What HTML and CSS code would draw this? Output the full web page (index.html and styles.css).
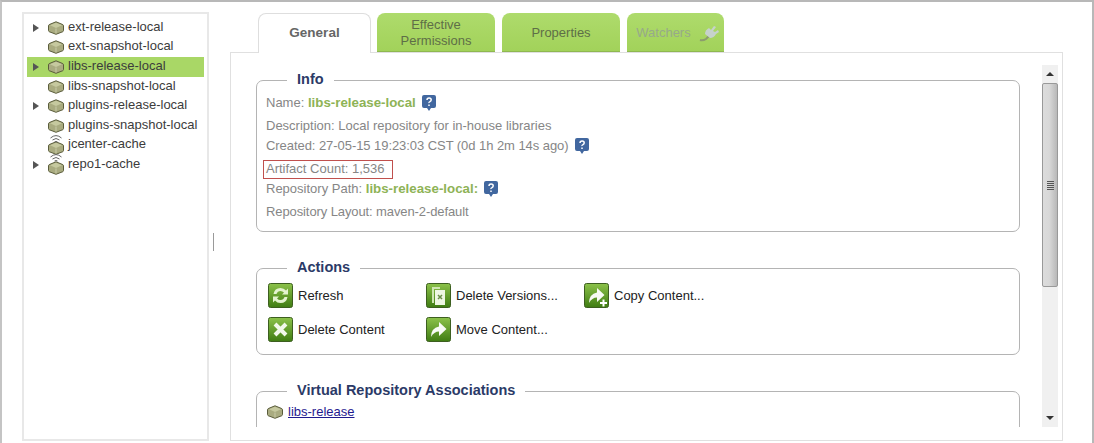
FILE: index.html
```html
<!DOCTYPE html>
<html lang="en">
<head>
<meta charset="utf-8">
<title>Repository Browser</title>
<link rel="stylesheet" href="styles.css">
</head>
<body>
<svg class="defs" width="0" height="0" aria-hidden="true">
  <defs>
    <linearGradient id="green" x1="0" y1="0" x2="0" y2="1">
      <stop offset="0" stop-color="#8cc24a"/>
      <stop offset="1" stop-color="#3f7c12"/>
    </linearGradient>
    <symbol id="cube" viewBox="0 0 16 14">
      <path d="M8 .8 14.800 3.600Q15.500 4 15.500 5V9.500Q15.500 10.300 14.800 10.700L8 13.300 1.200 10.700Q.5 10.300.5 9.500V5Q.5 4 1.200 3.600z" fill="#a9ab80" stroke="#5b5d3c" stroke-width="1"/>
      <path d="M8 1.800 14 4.300 8 7 2 4.300z" fill="#c6c99f"/>
      <path d="M8 7.500v5" stroke="#c8caa8" stroke-width="1"/>
    </symbol>
    <symbol id="wifi" viewBox="0 0 16 9">
      <path d="M2.500 4Q8-.8 13.500 4M4.500 6Q8 3 11.500 6M6.500 8Q8 7 9.500 8" fill="none" stroke="#666" stroke-width="1"/>
    </symbol>
    <symbol id="help" viewBox="0 0 16 18">
      <path d="M3 1h10a2 2 0 0 1 2 2v9a2 2 0 0 1-2 2h-3l-2 3-2-3H3a2 2 0 0 1-2-2V3a2 2 0 0 1 2-2z" fill="#41679f"/>
      <path d="M6 6q0-2 2.100-2t2.100 1.800q0 1.200-1.200 1.800t-1 1.400M8 10.500v1.500" fill="none" stroke="#fff" stroke-width="1.500"/>
    </symbol>
    <symbol id="arrow" viewBox="0 0 25 25">
      <path d="M5 20q0-9 8-10.500V5l7.500 7-7.500 7v-4.500q-5 0-8 5.500z" fill="#fff" opacity=".95"/>
    </symbol>
  </defs>
</svg>
<div class="app">
  <nav class="tree">
    <div class="node"><span class="caret"></span><svg class="cube"><use href="#cube"/></svg><span>ext-release-local</span></div>
    <div class="node"><span class="nocaret"></span><svg class="cube"><use href="#cube"/></svg><span>ext-snapshot-local</span></div>
    <div class="node selected"><span class="caret"></span><svg class="cube"><use href="#cube"/></svg><span>libs-release-local</span></div>
    <div class="node"><span class="nocaret"></span><svg class="cube"><use href="#cube"/></svg><span>libs-snapshot-local</span></div>
    <div class="node"><span class="caret"></span><svg class="cube"><use href="#cube"/></svg><span>plugins-release-local</span></div>
    <div class="node"><span class="nocaret"></span><svg class="cube"><use href="#cube"/></svg><span>plugins-snapshot-local</span></div>
    <div class="node"><span class="nocaret"></span><span class="cached"><svg class="wifi"><use href="#wifi"/></svg><svg class="cube"><use href="#cube"/></svg></span><span>jcenter-cache</span></div>
    <div class="node"><span class="caret"></span><span class="cached"><svg class="wifi"><use href="#wifi"/></svg><svg class="cube"><use href="#cube"/></svg></span><span>repo1-cache</span></div>
  </nav>
  <div class="splitter"><span class="grip"></span></div>
  <main class="main">
    <div class="tabs">
      <div class="tab active">General</div>
      <div class="tab wide">Effective<br>Permissions</div>
      <div class="tab wide">Properties</div>
      <div class="tab off">Watchers<svg class="plug" viewBox="0 0 20 20"><path d="M1 17q3 1 6-1l3-3" fill="none" stroke="#8c9c6e" stroke-width="2"/><path d="M6 11q0-4 4-6l2 2 3-4 2 1-3 4 2 1 3-2 1 2-3 2q-2 4-6 4z" fill="#c6d2cc"/></svg></div>
    </div>
    <div class="panel">
      <div class="scroll">
        <fieldset class="box info">
          <legend>Info</legend>
          <div class="row">Name:&nbsp;<b class="val">libs-release-local</b><svg class="help"><use href="#help"/></svg></div>
          <div class="row gap">Description: Local repository for in-house libraries</div>
          <div class="row tight">Created: 27-05-15 19:23:03 CST (0d 1h 2m 14s ago)<svg class="help"><use href="#help"/></svg></div>
          <div class="row gap"><span class="mark">Artifact Count: 1,536</span></div>
          <div class="row">Repository Path:&nbsp;<b class="val">libs-release-local:</b><svg class="help"><use href="#help"/></svg></div>
          <div class="row gap tighter">Repository Layout: maven-2-default</div>
        </fieldset>
        <fieldset class="box actions">
          <legend>Actions</legend>
          <div class="grid">
            <div class="act"><svg class="btn" viewBox="0 0 25 25"><rect class="btnbg" fill="url(#green)" x=".5" y=".5" width="24" height="24" rx="2"/><path d="M5.500 11q1-6 7-6 3.500 0 5.500 2.500l2-2v6h-6l2-2q-1.500-1.500-3.500-1.500-3 0-4 3zM19.500 14q-1 6-7 6-3.500 0-5.500-2.500l-2 2v-6h6l-2 2q1.500 1.500 3.500 1.500 3 0 4-3z" fill="#e4f3cf"/></svg>Refresh</div>
            <div class="act"><svg class="btn" viewBox="0 0 25 25"><rect class="btnbg" fill="url(#green)" x=".5" y=".5" width="24" height="24" rx="2"/><path d="M6 4h8v2H8v14H6z" fill="#cfe6b2"/><path d="M9 7h10v15H9z" fill="#eef7e2"/><path d="m12 12 4 4m0-4-4 4" stroke="#6b8f49" stroke-width="1.500"/></svg>Delete Versions...</div>
            <div class="act"><svg class="btn" viewBox="0 0 25 25"><rect class="btnbg" fill="url(#green)" x=".5" y=".5" width="24" height="24" rx="2"/><use href="#arrow"/><path d="M16 20h7M19.500 16.500v7" stroke="#fff" stroke-width="2"/></svg>Copy Content...</div>
            <div class="act"><svg class="btn" viewBox="0 0 25 25"><rect class="btnbg" fill="url(#green)" x=".5" y=".5" width="24" height="24" rx="2"/><path d="m7 7 11 11m0-11L7 18" stroke="#f2f8ea" stroke-width="4"/></svg>Delete Content</div>
            <div class="act"><svg class="btn" viewBox="0 0 25 25"><rect class="btnbg" fill="url(#green)" x=".5" y=".5" width="24" height="24" rx="2"/><use href="#arrow"/></svg>Move Content...</div>
          </div>
        </fieldset>
        <fieldset class="box virtual">
          <legend>Virtual Repository Associations</legend>
          <div class="assoc"><svg class="cube"><use href="#cube"/></svg><a href="#">libs-release</a></div>
        </fieldset>
      </div>
      <div class="bar">
        <div class="up"></div>
        <div class="thumb"><span class="lines"></span></div>
        <div class="track"></div>
        <div class="down"></div>
      </div>
    </div>
  </main>
</div>
</body>
</html>
```

FILE: styles.css
```css
* { box-sizing: border-box; }
html, body { margin: 0; height: 100%; background: #fff; overflow: hidden; }
body { font: 13px/1.2 "Liberation Sans", Arial, sans-serif; color: #333; }
.defs { position: absolute; }

.app {
  display: flex;
  height: 443px;
  border-top: 2px solid #b8b8b8;
  border-left: 2px solid #c4c4c4;
  border-right: 2px solid #b8b8b8;
  padding: 10px 0 2px 20px;
}

.tree {
  width: 187px;
  border: 2px solid #e8e8e8;
  padding: 4px 3px 0;
  flex: none;
}
.node {
  display: flex;
  align-items: center;
  height: 19.5px;
  padding: 0 0 2px 6px;
  color: #3c3c3c;
}
.node.selected { background: #a9d766; height: 20px; }
.caret {
  width: 0;
  height: 0;
  border-left: 6px solid #555;
  border-top: 4px solid transparent;
  border-bottom: 4px solid transparent;
  margin: 2px 9px 0 0;
}
.nocaret { width: 15px; }
.cube { width: 16px; height: 14px; margin: 2px 4px 0 0; flex: none; }
.cached { position: relative; display: flex; align-items: flex-end; height: 19.5px; padding-top: 5px; }
.wifi { width: 16px; height: 9px; position: absolute; top: -1px; left: 0; }
.cached .cube { margin-bottom: -1px; }

.splitter {
  width: 21px;
  flex: none;
  padding: 221px 0 0 4px;
}
.grip { display: block; width: 1px; height: 18px; background: #9a9a9a; }

.main { flex: 1; display: flex; flex-direction: column; min-width: 0; margin-right: 29px; }
.tabs { display: flex; gap: 7px; padding-left: 28px; height: 40px; flex: none; position: relative; z-index: 1; }
.tab {
  width: 118px;
  height: 39px;
  padding-top: 2px;
  background: linear-gradient(#aedb6c, #a2d25a);
  border-radius: 8px 8px 0 0;
  display: flex;
  align-items: center;
  justify-content: center;
  text-align: center;
  color: #5e6e47;
  line-height: 16px;
  margin-top: 1px;
  border-bottom: 1px solid #8fb850;
}
.tab.active {
  width: 113px;
  height: 40px;
  margin-right: -1px;
  padding: 0 0 2px;
  background: #fff;
  border: 1px solid #dedede;
  border-bottom: 0;
  font-weight: bold;
  font-size: 13.5px;
  color: #666;
}
.tab.off { width: 97px; color: #97a98a; gap: 8px; padding-left: 4px; }
.plug { width: 20px; height: 20px; }

.panel {
  flex: 1;
  min-height: 0;
  border: 1px solid #e0e0e0;
  display: flex;
  padding: 18px 4px 13px 25px;
  gap: 22px;
}
.scroll { flex: 1; min-width: 0; overflow: hidden; margin-top: -6px; padding-top: 6px; }

.box {
  margin: 0 0 27px;
  padding: 0 9px;
  border: 1px solid #b4b4b4;
  border-radius: 7px;
  min-width: 0;
}
.box legend {
  margin-left: 21px;
  padding: 0 10px 2px;
  font-weight: bold;
  font-size: 14.5px;
  line-height: 16px;
  color: #2b3a67;
}
.info { height: 161px; padding-top: 4px; }
.actions { height: 96px; }
.virtual { height: 60px; margin-bottom: 0; }

.row { display: flex; align-items: center; height: 20px; color: #868686; white-space: nowrap; }
.row.gap { margin-top: 3px; }
.row.tight { letter-spacing: -.06px; }
.row.tighter { letter-spacing: -.1px; }
.val { color: #8eb356; font-size: 13.3px; }
.help { width: 16px; height: 18px; margin-left: 5px; }
.mark {
  border: 1px solid #c0504d;
  margin-left: -3px;
  padding: 1px 7px 2px 2px;
  width: 130px;
  height: 19px;
  line-height: 14px;
}

.grid { display: grid; grid-template-columns: 158px 158px 158px; row-gap: 9px; padding: 6px 2px 0; }
.act { display: flex; align-items: center; gap: 5px; color: #222; white-space: nowrap; height: 25px; }
.btn { width: 25px; height: 25px; flex: none; }
.btnbg { stroke: #3d5f20; }

.assoc { display: flex; align-items: center; color: #222; padding: 4px 0 0 1px; }
.assoc .cube { margin: 0 5px 0 0; }
.assoc a { color: #1f1a8f; }

.bar { width: 16px; flex: none; display: flex; flex-direction: column; background: #f0f0f0; margin-top: -6px; }
.up, .down { height: 18px; flex: none; position: relative; }
.up::after, .down::after {
  content: "";
  position: absolute;
  left: 4px;
  top: 7px;
  border-left: 4px solid transparent;
  border-right: 4px solid transparent;
}
.up::after { border-bottom: 4px solid #333; }
.down::after { border-top: 4px solid #333; }
.thumb {
  height: 204px;
  flex: none;
  border: 1px solid #999;
  border-radius: 2px;
  background: linear-gradient(90deg, #dcdcdc, #d8d8d8 45%, #b8b8b8);
  display: flex;
  align-items: center;
  justify-content: center;
}
.lines {
  width: 7px;
  height: 9px;
  background: repeating-linear-gradient(#555 0 1px, transparent 1px 2px);
}
.track { flex: 1; }
```
